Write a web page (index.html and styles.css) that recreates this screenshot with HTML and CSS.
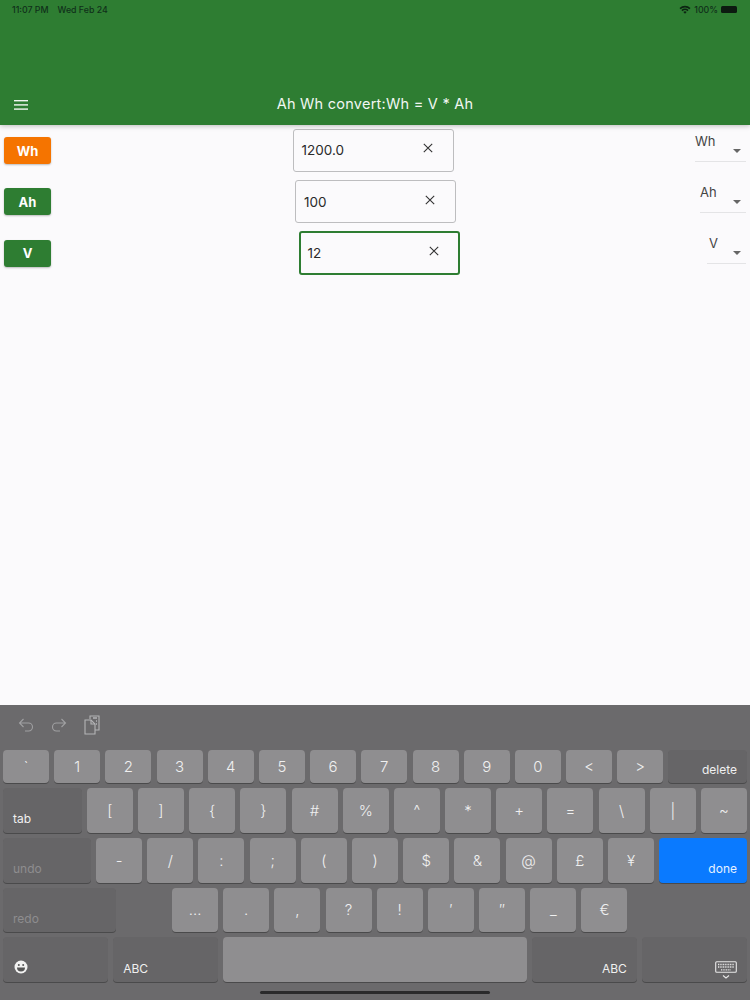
FILE: index.html
```html
<!DOCTYPE html>
<html lang="en">
<head>
  <meta charset="UTF-8" />
  <meta name="viewport" content="width=device-width, initial-scale=1.0" />
  <title>Ah Wh convert</title>
  <link rel="stylesheet" href="styles.css">
</head>
<body>
  <header class="app-bar">
    <div class="status-bar">
      <div class="status-left"><span>11:07 PM</span><span>Wed Feb 24</span></div>
      <div class="status-right">
        <svg class="wifi" width="12" height="9" viewBox="0 0 12 9">
          <path d="M0.5 3 A8 8 0 0 1 11.5 3 L10.4 4.2 A6.4 6.4 0 0 0 1.6 4.2 Z" />
          <path d="M2.4 5 A5.2 5.2 0 0 1 9.6 5 L8.5 6.2 A3.6 3.6 0 0 0 3.5 6.2 Z" />
          <path d="M4.3 7 A2.5 2.5 0 0 1 7.7 7 L6 8.8 Z" />
        </svg>
        <span>100%</span>
        <div class="battery"></div>
      </div>
    </div>
    <div class="toolbar">
      <svg class="menu-icon" width="14" height="10" viewBox="0 0 14 10">
        <rect y="0" width="14" height="1.4" />
        <rect y="4.2" width="14" height="1.4" />
        <rect y="8.4" width="14" height="1.4" />
      </svg>
      <div class="title">Ah Wh convert:Wh = V * Ah</div>
    </div>
  </header>

  <main class="content">
    <div class="row">
      <button class="unit-btn active">Wh</button>
      <div class="field">
        <span>1200.0</span>
        <svg class="clear" width="10" height="10" viewBox="0 0 10 10"><path d="M0.8 0.8 L9.2 9.2 M9.2 0.8 L0.8 9.2" /></svg>
      </div>
      <div class="dropdown dd-wh"><span>Wh</span><i class="caret"></i></div>
    </div>
    <div class="row">
      <button class="unit-btn">Ah</button>
      <div class="field">
        <span>100</span>
        <svg class="clear" width="10" height="10" viewBox="0 0 10 10"><path d="M0.8 0.8 L9.2 9.2 M9.2 0.8 L0.8 9.2" /></svg>
      </div>
      <div class="dropdown dd-ah"><span>Ah</span><i class="caret"></i></div>
    </div>
    <div class="row">
      <button class="unit-btn">V</button>
      <div class="field focused">
        <span>12</span>
        <svg class="clear" width="10" height="10" viewBox="0 0 10 10"><path d="M0.8 0.8 L9.2 9.2 M9.2 0.8 L0.8 9.2" /></svg>
      </div>
      <div class="dropdown dd-v"><span>V</span><i class="caret"></i></div>
    </div>
  </main>

  <section class="keyboard">
    <div class="kb-tools">
      <svg width="16" height="16" viewBox="0 0 16 16">
        <path d="M5.5 2 L1.5 6 L5.5 10 M1.5 6 H10.5 A4 4 0 0 1 10.5 14 H7" />
      </svg>
      <svg width="16" height="16" viewBox="0 0 16 16">
        <path d="M10.5 2 L14.5 6 L10.5 10 M14.5 6 H5.5 A4 4 0 0 0 5.5 14 H9" />
      </svg>
      <svg class="paste" width="16" height="20" viewBox="0 0 16 20">
        <path d="M6 4 V1 H15 V15 H11" />
        <path d="M1 5 H7 L11 9 V19 H1 Z" />
        <path d="M7 5 V9 H11" />
        <path class="paste-lines" d="M9 3 H13 M12 6 H13 M12 9 H13" />
      </svg>
    </div>

    <div class="kb-row r1">
      <div class="key">`</div><div class="key">1</div><div class="key">2</div><div class="key">3</div>
      <div class="key">4</div><div class="key">5</div><div class="key">6</div><div class="key">7</div>
      <div class="key">8</div><div class="key">9</div><div class="key">0</div><div class="key">&lt;</div>
      <div class="key">&gt;</div>
      <div class="key fn grow right">delete</div>
    </div>
    <div class="kb-row">
      <div class="key fn grow">tab</div>
      <div class="key">[</div><div class="key">]</div><div class="key">{</div><div class="key">}</div>
      <div class="key">#</div><div class="key">%</div><div class="key">^</div><div class="key">*</div>
      <div class="key">+</div><div class="key">=</div><div class="key">\</div><div class="key">|</div>
      <div class="key">~</div>
    </div>
    <div class="kb-row">
      <div class="key fn grow faded">undo</div>
      <div class="key">-</div><div class="key">/</div><div class="key">:</div><div class="key">;</div>
      <div class="key">(</div><div class="key">)</div><div class="key">$</div><div class="key">&amp;</div>
      <div class="key">@</div><div class="key">&pound;</div><div class="key">&yen;</div>
      <div class="key fn grow right done">done</div>
    </div>
    <div class="kb-row r4">
      <div class="key fn redo faded">redo</div>
      <div class="key first-sym">&hellip;</div><div class="key">.</div><div class="key">,</div><div class="key">?</div>
      <div class="key">!</div><div class="key">&prime;</div><div class="key">&Prime;</div><div class="key">_</div>
      <div class="key">&euro;</div>
    </div>
    <div class="kb-row r5">
      <div class="key fn wide">
        <svg class="emoji" width="14" height="14" viewBox="0 0 14 14">
          <circle cx="7" cy="7" r="6.5" fill="#f2f2f2" />
          <circle cx="4.8" cy="5" r="1" fill="#555" />
          <circle cx="9.2" cy="5" r="1" fill="#555" />
          <path d="M3 7.6 H11 A4 4 0 0 1 3 7.6 Z" fill="#555" />
        </svg>
      </div>
      <div class="key fn wide abc">ABC</div>
      <div class="key space"></div>
      <div class="key fn wide right abc">ABC</div>
      <div class="key fn wide right">
        <svg class="kb-hide" width="22" height="18" viewBox="0 0 22 18">
          <rect x="0.7" y="0.7" width="20.6" height="10.6" rx="1" />
          <path class="kb-dots" d="M3 3.5 H19 M3 6 H19 M6 8.8 H16" />
          <path d="M8 14.5 L11 17 L14 14.5" />
        </svg>
      </div>
    </div>
    <div class="home-bar"></div>
  </section>
</body>
</html>
```

FILE: styles.css
```css
:root {
  --green: #2e7d32;
  --orange: #f57400;
  --page-bg: #fbfafc;
  --kb-bg: #6b6a6c;
  --key-bg: #8f8e90;
  --key-fn: #666567;
  --key-text: #f0f0f0;
}

* { box-sizing: border-box; }

body {
  margin: 0;
  height: 100vh;
  overflow: hidden;
  background: var(--page-bg);
  font-family: 'Inter', 'Liberation Sans', sans-serif;
  display: flex;
  flex-direction: column;
}

.app-bar {
  height: 125px;
  background: var(--green);
  box-shadow: 0 1px 5px rgba(0, 0, 0, 0.25);
  display: flex;
  flex-direction: column;
  justify-content: space-between;
  position: relative;
}

.status-bar {
  display: flex;
  justify-content: space-between;
  align-items: center;
  height: 18px;
  padding: 0 13px 0 12px;
  font-size: 8.8px;
  font-weight: 500;
  color: #10301a;
}

.status-left span { margin-right: 9px; }

.status-right {
  display: flex;
  align-items: center;
  gap: 3px;
}

.wifi { fill: #0c2412; }

.battery {
  width: 16px;
  height: 7px;
  background: #0c1a10;
  border-radius: 1.5px;
}

.toolbar {
  position: relative;
  height: 40px;
  display: flex;
  align-items: center;
  justify-content: center;
  padding-bottom: 3px;
}

.menu-icon {
  position: absolute;
  left: 14px;
  top: 15px;
  fill: #f2f7f2;
}

.title {
  color: #f2f7f2;
  font-size: 14.5px;
  font-weight: 400;
  letter-spacing: 0.25px;
}

.content {
  flex: 1;
  padding: 3.5px 4px 0;
  display: flex;
  flex-direction: column;
  gap: 8px;
}

.row {
  display: flex;
  justify-content: space-between;
  align-items: flex-start;
  height: 43.3px;
}

.unit-btn {
  width: 47px;
  height: 27px;
  margin-top: 8.5px;
  border: none;
  border-radius: 3px;
  background: var(--green);
  color: #fff;
  font-family: inherit;
  font-size: 13px;
  font-weight: 700;
  box-shadow: 0 1px 2px rgba(0, 0, 0, 0.25);
}

.unit-btn.active { background: var(--orange); }

.field {
  width: 161px;
  height: 43.5px;
  border: 1px solid #bdbdbf;
  border-radius: 3px;
  padding: 0 20px 0 8px;
  display: flex;
  align-items: center;
  justify-content: space-between;
  font-size: 13.5px;
  color: #2a2a2a;
}

.field.focused { border: 2px solid var(--green); padding: 0 19px 0 7px; }

.clear {
  fill: none;
  stroke: #333;
  stroke-width: 1.1;
  margin-top: -4px;
}

.dropdown {
  position: relative;
  height: 33px;
  border-bottom: 1px solid #e4e4e6;
  font-size: 13px;
  color: #444;
  padding-top: 4px;
}

.dd-wh { width: 51px; }
.dd-ah { width: 46px; }
.dd-v { width: 39px; padding-left: 2px; }

.caret {
  position: absolute;
  right: 5px;
  top: 20px;
  border-left: 4px solid transparent;
  border-right: 4px solid transparent;
  border-top: 4px solid #666;
}

.keyboard {
  height: 295px;
  background: var(--kb-bg);
  padding: 0 3px;
  display: flex;
  flex-direction: column;
  gap: 5px;
  position: relative;
}

.kb-tools {
  height: 39.5px;
  display: flex;
  align-items: center;
  gap: 17px;
  padding-left: 15px;
}

.kb-tools svg {
  fill: none;
  stroke: #a0a0a2;
  stroke-width: 1.1;
}

.kb-tools .paste { stroke: #b4b4b6; }
.kb-tools .paste-lines { stroke-width: 1.6; }

.kb-row {
  display: flex;
  gap: 5.2px;
  height: 44.7px;
}

.kb-row.r1 { height: 33.7px; }
.kb-row.r5 { height: 45px; }

.key {
  width: 46px;
  flex: none;
  background: var(--key-bg);
  border-radius: 4px;
  box-shadow: 0 1px 0 rgba(0, 0, 0, 0.3);
  color: var(--key-text);
  font-size: 15px;
  font-weight: 300;
  display: flex;
  align-items: center;
  justify-content: center;
}

.key.fn {
  background: var(--key-fn);
  font-size: 12px;
  font-weight: 400;
  align-items: flex-end;
  justify-content: flex-start;
  padding: 0 10px 7px;
}

.r1 .key.fn, .r4 .key.fn, .r5 .key.fn { padding-bottom: 6px; }

.key.grow { flex: 1; }
.key.right { justify-content: flex-end; }
.key.faded { color: #8e8d8f; }
.key.done { background: #0a7aff; color: #e6f2ff; }
.key.redo { width: 113px; }
.key.first-sym { margin-left: 50.8px; }
.key.wide { width: 105px; }
.key.space { flex: 1; }

.emoji { margin-bottom: 2px; margin-left: 1px; }

.kb-hide {
  fill: none;
  stroke: #e8e8e8;
  stroke-width: 1.1;
  margin-bottom: -3px;
}

.kb-dots {
  stroke-width: 1.3;
  stroke-dasharray: 1 0.7;
}

.home-bar {
  position: absolute;
  left: 260px;
  bottom: 6px;
  width: 230px;
  height: 3.5px;
  border-radius: 2px;
  background: #2a2a2b;
}
```
